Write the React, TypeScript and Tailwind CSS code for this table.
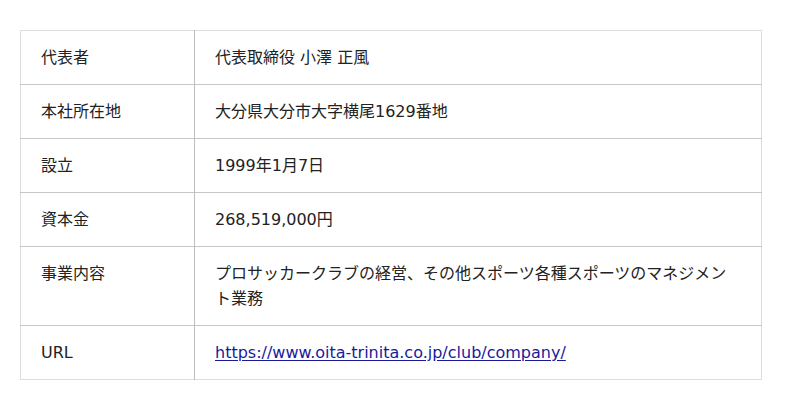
const rows: { label: string; value: React.ReactNode }[] = [
  { label: "代表者", value: "代表取締役 小澤 正風" },
  { label: "本社所在地", value: "大分県大分市大字横尾1629番地" },
  { label: "設立", value: "1999年1月7日" },
  { label: "資本金", value: "268,519,000円" },
  {
    label: "事業内容",
    value: "プロサッカークラブの経営、その他スポーツ各種スポーツのマネジメント業務",
  },
  {
    label: "URL",
    value: (
      <a href="#" className="text-[#1a1a9c] underline underline-offset-2">
        https://www.oita-trinita.co.jp/club/company/
      </a>
    ),
  },
];

export default function App() {
  return (
    <div
      className="bg-white px-5 pt-[30px] pb-[30px] text-[16px] leading-[25px] text-[#222]"
      style={{ fontFamily: '"DejaVu Sans", "Noto Sans CJK JP", sans-serif' }}
    >
      <table className="w-[742px] border-collapse border border-[#dddddd]">
        <tbody>
          {rows.map((row, i) => (
            <tr key={row.label} className={i > 0 ? "border-t border-[#c6c6c6]" : ""}>
              <td className="w-[174px] border-r border-[#bdbdbd] px-5 pt-[14px] pb-[14px] align-top">
                {row.label}
              </td>
              <td className="pl-5 pr-6 pt-[14px] pb-[14px] align-top">{row.value}</td>
            </tr>
          ))}
        </tbody>
      </table>
    </div>
  );
}
